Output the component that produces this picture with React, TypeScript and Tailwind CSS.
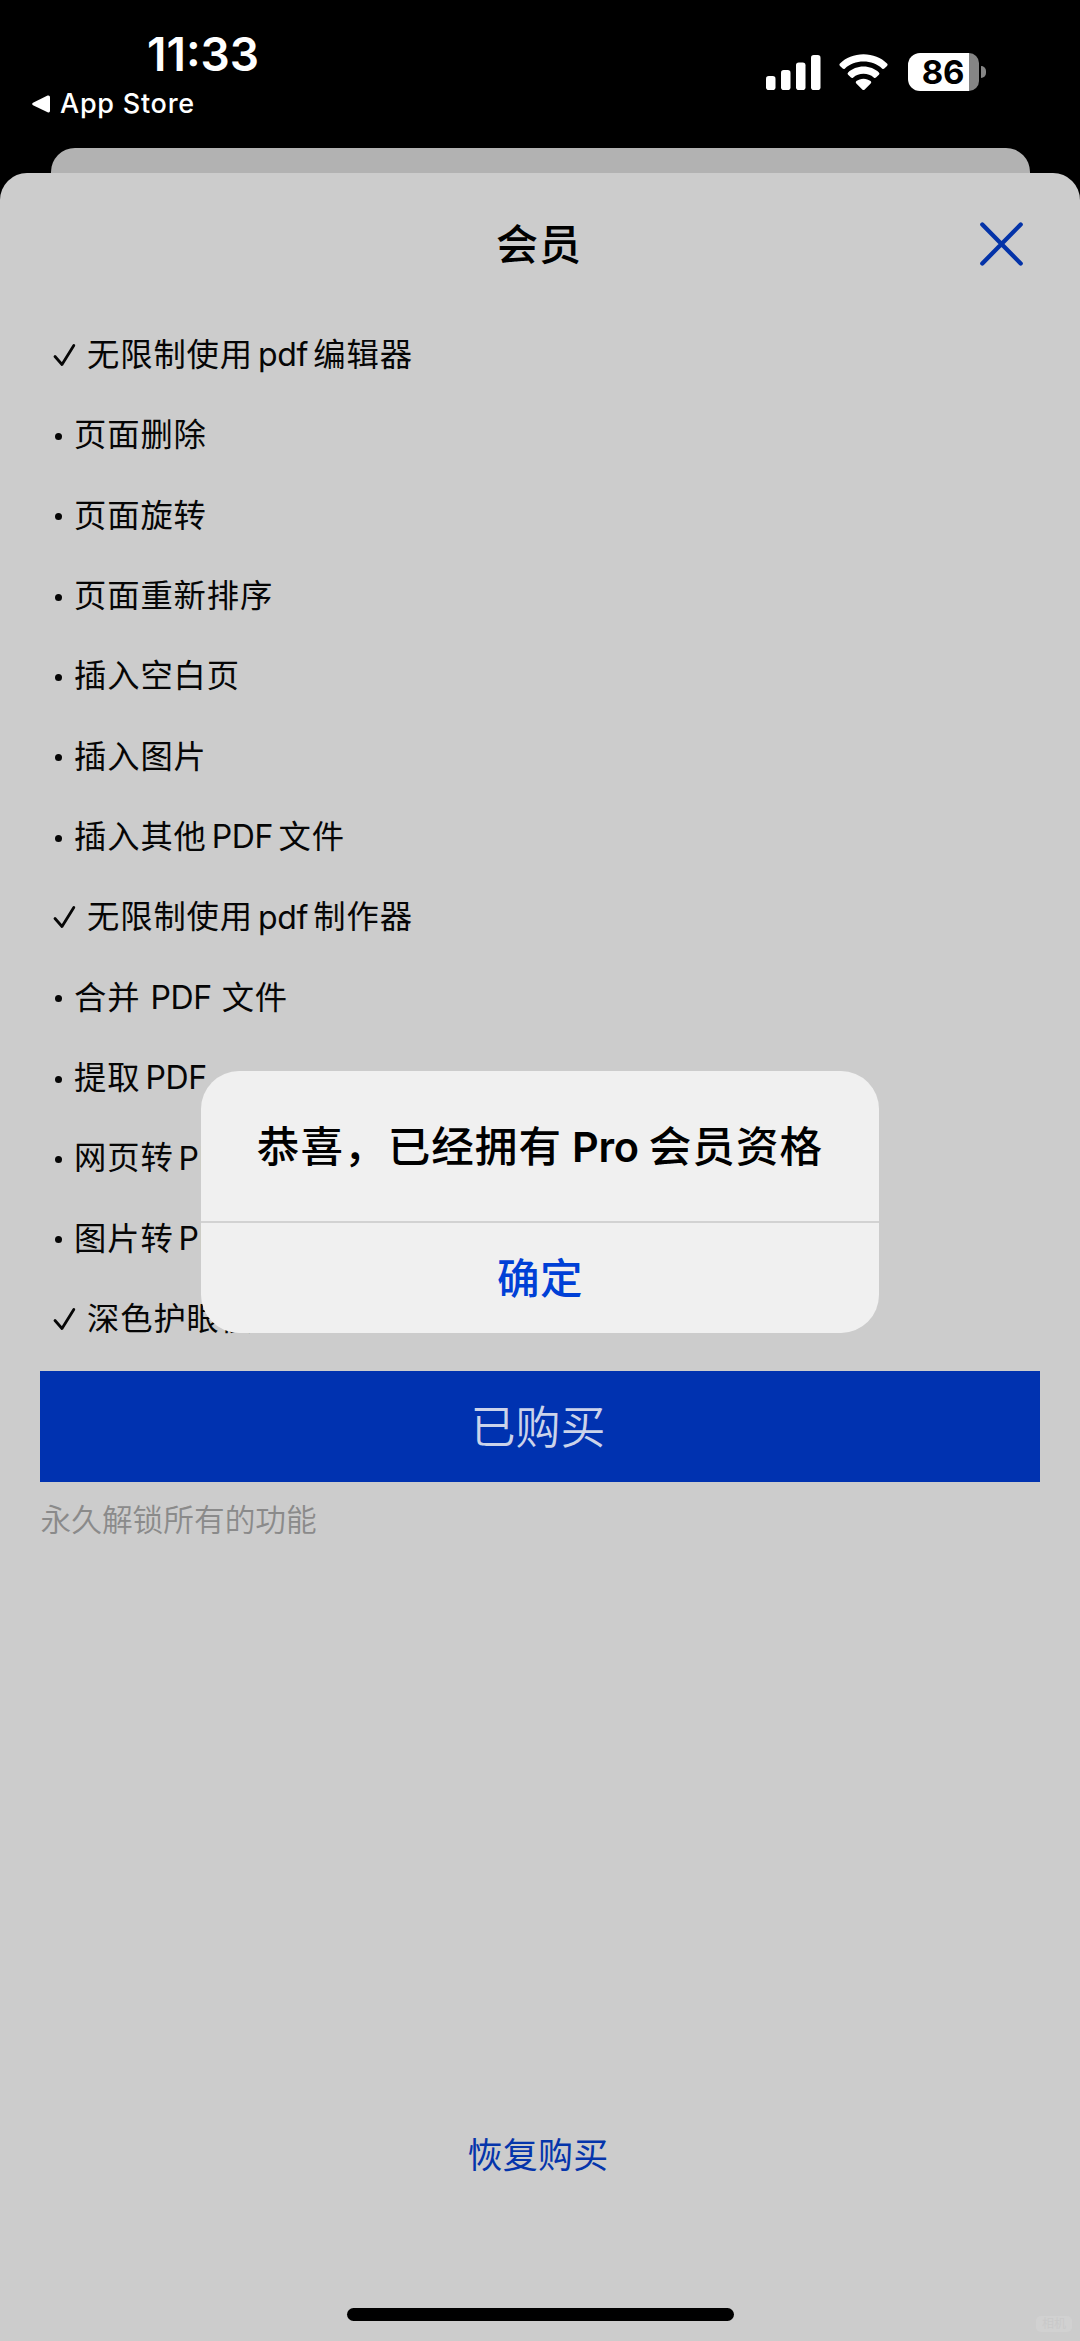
import React from "react";

type Mark = "check" | "dot";
type Feature = { mark: Mark; before: string; latin?: string; after?: string; spaced?: boolean };

const features: Feature[] = [
  { mark: "check", before: "无限制使用", latin: "pdf", after: "编辑器" },
  { mark: "dot", before: "页面删除" },
  { mark: "dot", before: "页面旋转" },
  { mark: "dot", before: "页面重新排序" },
  { mark: "dot", before: "插入空白页" },
  { mark: "dot", before: "插入图片" },
  { mark: "dot", before: "插入其他", latin: "PDF", after: "文件" },
  { mark: "check", before: "无限制使用", latin: "pdf", after: "制作器" },
  { mark: "dot", before: "合并", latin: "PDF", after: "文件", spaced: true },
  { mark: "dot", before: "提取", latin: "PDF" },
  { mark: "dot", before: "网页转", latin: "PDF" },
  { mark: "dot", before: "图片转", latin: "PDF" },
  { mark: "check", before: "深色护眼模式" },
];

function StatusBar() {
  return (
    <header className="flex h-[148px] justify-between text-white">
      <div className="flex flex-col pl-[32px] pt-[27px]">
        <div className="ml-[115px] h-[54px] text-[46px] leading-[54px] font-semibold">11:33</div>
        <div className="mt-[6px] flex h-[34px] items-center gap-[10px]">
          <svg width="18" height="18" viewBox="0 0 18 18" fill="currentColor">
            <path d="M1 7.700 15.600.6Q18 0 18 2.200V15.800Q18 18 15.600 17.200L1 10.200Q-.8 9 1 7.700Z" />
          </svg>
          <span className="text-[27px] leading-[34px] font-medium tracking-[0.75px]">App Store</span>
        </div>
      </div>
      <div className="mt-[53px] mr-[94.500px] flex h-[40px]">
        <svg width="55" height="38" viewBox="0 0 55 38" fill="currentColor">
          <rect x="0" y="23" width="9.500" height="14" rx="2.800" />
          <rect x="15" y="17" width="9.500" height="20" rx="2.800" />
          <rect x="30" y="9.500" width="9.500" height="27.500" rx="2.800" />
          <rect x="45" y="2" width="9.500" height="35" rx="2.800" />
        </svg>
        <svg className="ml-[18px]" width="50" height="38" viewBox="0 0 50 38" fill="currentColor">
          <path d="M24.500 1.300C33.800 1.300 42.200 4.800 48 10.500Q49.200 11.700 48 12.900L45.300 15.600Q44.200 16.600 43 15.500C38.200 11.100 31.700 8.600 24.500 8.600S10.800 11.100 6 15.500Q4.800 16.600 3.700 15.600L1 12.900Q-.2 11.700 1 10.500C6.800 4.800 15.200 1.300 24.500 1.300Z" />
          <path d="M24.500 13.500C30.500 13.500 35.900 15.800 39.900 19.400Q41.100 20.600 39.900 21.800L37 24.500Q35.900 25.500 34.700 24.400C32 22.200 28.400 20.800 24.500 20.800S17 22.200 14.300 24.400Q13.100 25.500 12 24.500L9.100 21.800Q7.900 20.600 9.100 19.400C13.100 15.800 18.500 13.500 24.500 13.500Z" />
          <path d="M24.500 25.700C27.200 25.700 29.700 26.600 31.600 28.100Q33 29.400 31.700 30.600L25.700 36.400Q24.500 37.500 23.300 36.400L17.300 30.600Q16 29.400 17.400 28.100C19.300 26.600 21.800 25.700 24.500 25.700Z" />
        </svg>
        <div className="ml-[18.500px] flex h-[38px] w-[71px]">
          <div className="flex h-[38px] w-[61px] items-center justify-center rounded-l-[12px] bg-white pl-[10px] text-[33px] leading-[36px] font-bold tracking-[-0.2px] text-black">86</div>
          <div className="h-[38px] w-[10px] rounded-r-[12px] bg-[#858585]" />
        </div>
        <div className="mt-[13px] ml-[2px] h-[12px] w-[5px] rounded-r-full bg-[#858585]" />
      </div>
    </header>
  );
}

function FeatureRow({ mark, before, latin, after, spaced }: Feature) {
  return (
    <li className="flex h-[80.350px] items-center whitespace-nowrap">
      {mark === "check" ? (
        <svg className="mr-[11px] mb-px ml-px shrink-0" width="23" height="24" viewBox="0 0 23 24" fill="none" stroke="currentColor" strokeWidth="2.800" strokeLinecap="round" strokeLinejoin="round">
          <path d="M2 13.500 9 21.500 20.800 2.500" />
        </svg>
      ) : (
        <span className="mt-[2px] mr-[12.500px] ml-[2.500px] size-[7px] shrink-0 rounded-full bg-current" />
      )}
      <span>{before}</span>
      {latin && (
        <span className={spaced ? "mr-[10px] ml-[10px] text-[32px] tracking-[-0.4px]" : "mr-[5.500px] ml-[5px] text-[32px] tracking-[-0.4px]"}>
          {latin}
        </span>
      )}
      {after && <span>{after}</span>}
    </li>
  );
}

function Alert() {
  return (
    <div role="alertdialog" className="absolute top-[1071px] left-[201px] flex h-[262px] w-[678px] flex-col overflow-hidden rounded-[38px] bg-[#f0f0f0]">
      <div className="flex h-[152px] items-center justify-center border-b-2 border-[#d2d2d2] pt-[2px] text-[42.500px] font-medium tracking-[1.1px] whitespace-nowrap text-black">
        <span>恭喜，已经拥有</span>
        <span className="mr-[10px] ml-[10px] text-[41.500px] font-semibold tracking-[-0.3px]">Pro</span>
        <span>会员资格</span>
      </div>
      <button className="flex flex-1 items-center justify-center pt-[2px] text-[42.500px] font-medium tracking-[0.5px] text-[#0040d6]">确定</button>
    </div>
  );
}

export default function App() {
  return (
    <div className="relative flex h-[2341px] w-[1080px] flex-col overflow-hidden bg-black font-['Inter','Noto_Sans_CJK_SC',sans-serif] text-[#060606]">
      <StatusBar />
      <div className="mx-[50.500px] h-[25px] shrink-0 rounded-t-[24px] bg-[#b2b2b2]" />
      <main className="flex flex-1 flex-col rounded-t-[27px] bg-[#cccccc]">
        <div className="grid h-[142px] grid-cols-[1fr_auto_1fr] items-center px-[56px]">
          <h1 className="col-start-2 mt-px -ml-[2px] text-[42px] font-medium tracking-[1px] text-black">会员</h1>
          <svg className="justify-self-end" width="44" height="44" viewBox="0 0 44 44" fill="none" stroke="#0433a8" strokeWidth="4.300" strokeLinecap="round">
            <path d="M2.300 2.500 40.700 41.500M40.700 2.500 2.300 41.500" />
          </svg>
        </div>
        <ul className="flex flex-col pl-[52px] text-[32.300px] tracking-[0.9px]">
          {features.map((f, i) => (
            <FeatureRow key={i} {...f} />
          ))}
        </ul>
        <button className="mx-[40px] mt-[12px] flex h-[110.500px] shrink-0 items-center justify-center bg-[#0032b0] pt-[2px] pr-[4px] text-[45px] font-[350] text-[#cbd3ea]">已购买</button>
        <p className="mt-[16px] ml-[40.500px] text-[30.700px] leading-[44px] font-[350] text-[#8a8a8a]">永久解锁所有的功能</p>
        <button className="mt-[589px] mr-[4px] self-center text-[35px] leading-[48px] tracking-[0.3px] text-[#0535ab]">恢复购买</button>
        <div className="mt-auto mb-[20px] h-[13px] w-[387px] self-center rounded-full bg-black" />
      </main>
      <Alert />
      <div className="absolute top-[2316px] left-[1036px] flex h-[16px] w-[36px] items-center justify-center rounded-[5px] bg-[#d1d1d1] text-[12px] leading-[16px] text-[#c9c9c9]">相机</div>
    </div>
  );
}
